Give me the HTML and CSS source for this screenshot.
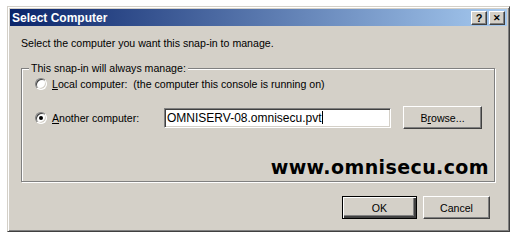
FILE: index.html
```html
<!DOCTYPE html>
<html lang="en">
<head>
    <meta charset="UTF-8">
    <title>Select Computer</title>
    <link rel="stylesheet" href="styles.css">
</head>
<body>
    <div class="window">
        <!-- Title Bar -->
        <div class="titlebar">
            <span class="title">Select Computer</span>
            <div class="title-buttons">
                <span class="tbtn">?</span>
                <span class="tbtn close">&#x2715;</span>
            </div>
        </div>

        <div class="content">
            <p class="intro">Select the computer you want this snap-in to manage.</p>

            <!-- Group box -->
            <div class="group">
                <span class="group-label">This snap-in will always manage:</span>
                <div class="option first">
                    <span class="radio"></span>
                    <span class="label"><u>L</u>ocal computer:&nbsp; (the computer this console is running on)</span>
                </div>
                <div class="option second">
                    <span class="radio checked"></span>
                    <span class="label fixed"><u>A</u>nother computer:</span>
                    <div class="textbox">OMNISERV-08.omnisecu.pvt<span class="caret"></span></div>
                    <button class="btn browse">B<u>r</u>owse...</button>
                </div>
            </div>

            <div class="actions">
                <button class="btn ok">OK</button>
                <button class="btn cancel">Cancel</button>
            </div>
        </div>

        <div class="watermark">www.omnisecu.com</div>
    </div>
</body>
</html>
```

FILE: styles.css
```css
body {
    margin: 0;
    padding: 6px 7px;
    background-color: white;
    font-family: "Liberation Sans", Arial, sans-serif;
    font-size: 10.6px;
    color: black;
}
/* Dialog frame */
.window {
    position: relative;
    width: 503px;
    height: 226px;
    box-sizing: border-box;
    padding: 2px;
    background-color: #d4d0c8;
    border: 1px solid;
    border-color: #d4d0c8 #404040 #404040 #d4d0c8;
    box-shadow: inset 1px 1px #fff, inset -1px -1px #808080;
}
/* Title Bar */
.titlebar {
    height: 17px;
    display: flex;
    align-items: center;
    justify-content: space-between;
    padding: 0 2px 0 2px;
    background: linear-gradient(to right, #0a246a, #a6caf0);
}
.title {
    color: white;
    font-weight: bold;
    font-size: 12px;
}
.title-buttons {
    display: flex;
    gap: 2px;
}
.tbtn {
    width: 16px;
    height: 14px;
    box-sizing: border-box;
    display: flex;
    align-items: center;
    justify-content: center;
    background-color: #d4d0c8;
    border: 1px solid;
    border-color: #fff #404040 #404040 #fff;
    box-shadow: inset -1px -1px #808080;
    font-weight: bold;
    font-size: 11px;
}
.tbtn.close {
    font-size: 9px;
}
/* Main content */
.content {
    padding: 11px 10px 0 11px;
}
.intro {
    margin: 0;
    line-height: 13px;
}
.group {
    position: relative;
    margin-top: 18px;
    height: 114px;
    width: 474px;
    box-sizing: border-box;
    padding: 7px 0 0 13px;
    border: 1px solid #808080;
    box-shadow: inset 1px 1px #fff, 1px 1px #fff;
}
.group-label {
    position: absolute;
    top: -7px;
    left: 7px;
    padding: 0 2px;
    line-height: 13px;
    background-color: #d4d0c8;
}
.option {
    display: flex;
    align-items: center;
}
.option.first {
    height: 16px;
}
.option.second {
    height: 23px;
    margin-top: 14px;
}
.label {
    margin-left: 5px;
}
.label.fixed {
    width: 112px;
}
/* Radio buttons */
.radio {
    position: relative;
    width: 12px;
    height: 12px;
    box-sizing: border-box;
    border-radius: 50%;
    background-color: white;
    border: 1px solid;
    border-color: #808080 #fff #fff #808080;
    box-shadow: inset 1px 1px #404040, inset -1px -1px #d4d0c8;
}
.radio.checked::after {
    content: "";
    position: absolute;
    left: 3px;
    top: 3px;
    width: 4px;
    height: 4px;
    border-radius: 50%;
    background-color: black;
}
/* Text box */
.textbox {
    width: 227px;
    height: 20px;
    box-sizing: border-box;
    display: flex;
    align-items: center;
    padding-left: 2px;
    background-color: white;
    border: 1px solid;
    border-color: #808080 #fff #fff #808080;
    box-shadow: inset 1px 1px #404040, inset -1px -1px #d4d0c8;
    font-size: 12px;
}
.caret {
    width: 1px;
    height: 13px;
    background-color: black;
}
/* Push buttons */
.btn {
    height: 23px;
    box-sizing: border-box;
    padding: 0;
    background-color: #d4d0c8;
    border: 1px solid;
    border-color: #fff #404040 #404040 #fff;
    box-shadow: inset -1px -1px #808080;
    font-family: inherit;
    font-size: 10.6px;
    color: black;
}
.btn.browse {
    width: 79px;
    margin-left: 12px;
}
.btn.ok {
    width: 75px;
    border: 1px solid black;
    box-shadow: inset 1px 1px #fff, inset -2px -2px #404040, inset -2px -2px 0 1px #808080;
}
.btn.cancel {
    width: 67px;
}
.actions {
    display: flex;
    justify-content: flex-end;
    gap: 6px;
    margin-top: 14px;
    padding-right: 5px;
    width: 474px;
    box-sizing: border-box;
}
/* Watermark text */
.watermark {
    position: absolute;
    top: 150px;
    right: 20px;
    font-family: "DejaVu Sans", Verdana, sans-serif;
    font-weight: bold;
    font-size: 19px;
    line-height: 20px;
    letter-spacing: 0.4px;
}
```
